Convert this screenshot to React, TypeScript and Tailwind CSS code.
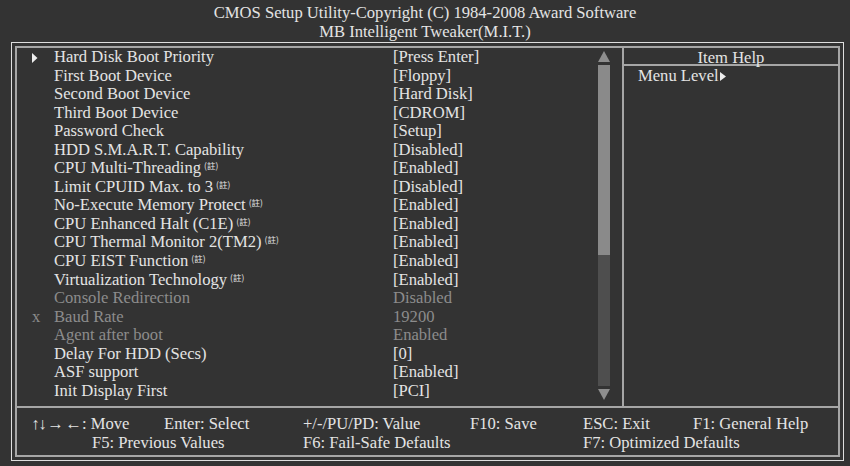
const rows = [
  { mark: 'arrow', label: 'Hard Disk Boot Priority', value: '[Press Enter]' },
  { label: 'First Boot Device', value: '[Floppy]' },
  { label: 'Second Boot Device', value: '[Hard Disk]' },
  { label: 'Third Boot Device', value: '[CDROM]' },
  { label: 'Password Check', value: '[Setup]' },
  { label: 'HDD S.M.A.R.T. Capability', value: '[Disabled]' },
  { label: 'CPU Multi-Threading', note: true, value: '[Enabled]' },
  { label: 'Limit CPUID Max. to 3', note: true, value: '[Disabled]' },
  { label: 'No-Execute Memory Protect', note: true, value: '[Enabled]' },
  { label: 'CPU Enhanced Halt (C1E)', note: true, value: '[Enabled]' },
  { label: 'CPU Thermal Monitor 2(TM2)', note: true, value: '[Enabled]' },
  { label: 'CPU EIST Function', note: true, value: '[Enabled]' },
  { label: 'Virtualization Technology', note: true, value: '[Enabled]' },
  { label: 'Console Redirection', value: 'Disabled', dim: true },
  { mark: 'x', label: 'Baud Rate', value: '19200', dim: true },
  { label: 'Agent after boot', value: 'Enabled', dim: true },
  { label: 'Delay For HDD (Secs)', value: '[0]' },
  { label: 'ASF support', value: '[Enabled]' },
  { label: 'Init Display First', value: '[PCI]' },
]

function Note() {
  return (
    <span className="ml-[3px] inline-block align-top pt-[2px] font-['Noto_Sans_CJK_TC','Noto_Sans_CJK_SC',sans-serif] text-[8.5px] leading-[9px]">
      (註)
    </span>
  )
}

function Scrollbar() {
  return (
    <div className="flex w-[12px] flex-col pt-[3px]">
      <svg width="12" height="11" viewBox="0 0 12 11" className="block">
        <polygon points="6,0 12,11 0,11" fill="#8e8e8e" />
      </svg>
      <div className="mt-[3px] h-[190px] bg-[#8a8a8a]" />
      <div className="h-[131px] bg-[#4e4e4e]" />
      <svg width="12" height="11" viewBox="0 0 12 11" className="mt-[3px] block">
        <polygon points="0,0 12,0 6,11" fill="#8e8e8e" />
      </svg>
    </div>
  )
}

export default function App() {
  return (
    <div className="h-[466px] w-[850px] overflow-hidden bg-[#333333] font-['Liberation_Serif','DejaVu_Serif',serif] text-[16.6px] leading-[19px] text-[#e4e4e4]">
      <div className="h-[42px] pt-[3px] text-center">
        <div>CMOS Setup Utility-Copyright (C) 1984-2008 Award Software</div>
        <div>MB Intelligent Tweaker(M.I.T.)</div>
      </div>

      <div className="ml-[11px] h-[419px] w-[833px] border border-[#dedede] p-[3px]">
        <div className="flex h-full flex-col border-2 border-[#a6a6a6]">
          <div className="flex h-[360px] border-b-2 border-[#a6a6a6]">
            <div className="flex w-[605px] pl-[15px]">
              <div className="w-[566px]">
                {rows.map((r) => (
                  <div
                    key={r.label}
                    className={`grid grid-cols-[22px_339px_205px] leading-[18.55px] whitespace-nowrap ${r.dim ? 'text-[#8c8c8c]' : ''}`}
                  >
                    <div>
                      {r.mark === 'arrow' && (
                        <svg width="6" height="10" viewBox="0 0 6 10" className="mt-[4.5px] block">
                          <polygon points="0,0 5.5,5 0,10" fill="#eeeeee" />
                        </svg>
                      )}
                      {r.mark === 'x' && <span>x</span>}
                    </div>
                    <div>
                      {r.label}
                      {r.note && <Note />}
                    </div>
                    <div>{r.value}</div>
                  </div>
                ))}
              </div>
              <Scrollbar />
            </div>

            <div className="flex-1 border-l-2 border-[#a6a6a6]">
              <div className="h-[18px] border-b-2 border-[#a6a6a6] pt-[1px] text-center leading-[18.55px]">Item Help</div>
              <div className="pl-[14px] pt-[0.5px] leading-[18.55px]">
                Menu Level
                <svg width="6" height="9" viewBox="0 0 6 9" className="ml-[1px] inline-block align-baseline">
                  <polygon points="0,0 6,4.5 0,9" fill="#eeeeee" />
                </svg>
              </div>
            </div>
          </div>

          <div className="flex-1 whitespace-nowrap pt-[6px]">
            <div className="flex pl-[15px]">
              <div className="flex w-[132px]">
                <span className="inline-flex w-[7px] justify-center">↑</span>
                <span className="inline-flex w-[7px] justify-center">↓</span>
                <span className="inline-flex w-[19px] justify-center">→</span>
                <span className="inline-flex w-[17px] justify-center">←</span>
                <span>: Move</span>
              </div>
              <div className="w-[139px]">Enter: Select</div>
              <div className="w-[167px]">+/-/PU/PD: Value</div>
              <div className="w-[113px]">F10: Save</div>
              <div className="w-[110px]">ESC: Exit</div>
              <div>F1: General Help</div>
            </div>
            <div className="flex pl-[75px]">
              <div className="w-[211px]">F5: Previous Values</div>
              <div className="w-[280px]">F6: Fail-Safe Defaults</div>
              <div>F7: Optimized Defaults</div>
            </div>
          </div>
        </div>
      </div>
    </div>
  )
}
